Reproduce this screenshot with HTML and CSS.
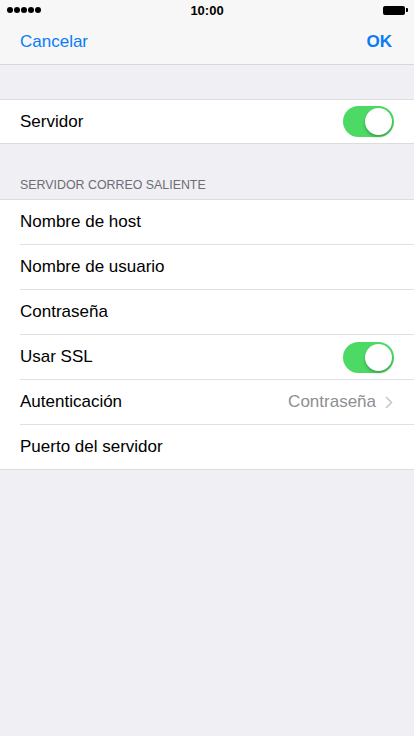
FILE: index.html
```html
<!DOCTYPE html>
<html lang="es">
<head>
    <meta charset="UTF-8">
    <meta name="viewport" content="width=device-width, initial-scale=1.0">
    <title>Servidor correo saliente</title>
    <link rel="stylesheet" href="styles.css">
</head>
<body>
    <div class="top">
        <div class="status-bar">
            <div class="signal">
                <span></span><span></span><span></span><span></span><span></span>
            </div>
            <div class="time">10:00</div>
            <div class="battery"><span class="battery-body"></span><span class="battery-nub"></span></div>
        </div>
        <nav class="nav-bar">
            <a class="nav-btn">Cancelar</a>
            <a class="nav-btn nav-done">OK</a>
        </nav>
    </div>

    <main>
        <ul class="group first">
            <li class="cell">
                <span class="label">Servidor</span>
                <span class="switch on"><span class="knob"></span></span>
            </li>
        </ul>

        <div class="group-header">SERVIDOR CORREO SALIENTE</div>
        <ul class="group">
            <li class="cell"><span class="label">Nombre de host</span></li>
            <li class="cell"><span class="label">Nombre de usuario</span></li>
            <li class="cell"><span class="label">Contraseña</span></li>
            <li class="cell">
                <span class="label">Usar SSL</span>
                <span class="switch on"><span class="knob"></span></span>
            </li>
            <li class="cell">
                <span class="label">Autenticación</span>
                <span class="detail">Contraseña
                    <svg class="chevron" width="8" height="13" viewBox="0 0 8 13"><path d="M1 1l5.5 5.5L1 12" fill="none" stroke="#c7c7cc" stroke-width="1.6"/></svg>
                </span>
            </li>
            <li class="cell"><span class="label">Puerto del servidor</span></li>
        </ul>
    </main>
</body>
</html>
```

FILE: styles.css
```css
body {
    margin: 0;
    padding: 0;
    background-color: #efeff4;
    font-family: "Liberation Sans", Arial, sans-serif;
    color: #000;
    min-height: 736px;
}
.top {
    background-color: #f7f7f7;
    border-bottom: 1px solid #d8d8dc;
}
.status-bar {
    height: 20px;
    display: flex;
    align-items: center;
    justify-content: space-between;
    padding: 0 6px 0 7px;
    position: relative;
}
.signal {
    display: flex;
    gap: 1px;
}
.signal span {
    width: 6px;
    height: 6px;
    border-radius: 50%;
    background-color: #000;
}
.time {
    font-size: 13px;
    font-weight: bold;
    position: absolute;
    left: 0;
    right: 0;
    text-align: center;
}
.battery {
    display: flex;
    align-items: center;
}
.battery-body {
    width: 22px;
    height: 9px;
    background-color: #000;
    border-radius: 2px;
}
.battery-nub {
    width: 2px;
    height: 4px;
    background-color: #000;
    border-radius: 0 1px 1px 0;
    margin-left: 1px;
}
.nav-bar {
    height: 44px;
    display: flex;
    align-items: center;
    justify-content: space-between;
    padding: 0 22px 0 20px;
}
.nav-btn {
    color: #0a7bf7;
    font-size: 17px;
}
.nav-done {
    font-weight: bold;
}
main {
    padding-top: 34px;
}
.group {
    list-style: none;
    margin: 0;
    padding: 0 0 0 20px;
    background-color: #fff;
    border-top: 1px solid #dcdce0;
    border-bottom: 1px solid #dcdce0;
}
.cell {
    height: 44px;
    display: flex;
    align-items: center;
    justify-content: space-between;
    padding-right: 20px;
    border-bottom: 1px solid #e0e0e4;
    font-size: 17px;
}
.cell:last-child {
    border-bottom: none;
    height: 44px;
}
.first .cell {
    height: 43px;
}
.group-header {
    padding: 33px 20px 6px;
    font-size: 12.4px;
    color: #6d6d72;
    line-height: 16px;
}
.detail {
    color: #8e8e93;
    display: flex;
    align-items: center;
    gap: 9px;
    padding-right: 1px;
}
.switch {
    width: 51px;
    height: 31px;
    border-radius: 16px;
    background-color: #4cd964;
    position: relative;
}
.knob {
    position: absolute;
    top: 2px;
    right: 2px;
    width: 27px;
    height: 27px;
    border-radius: 50%;
    background-color: #fff;
    box-shadow: 0 2px 3px rgba(0, 0, 0, 0.25);
}
```
